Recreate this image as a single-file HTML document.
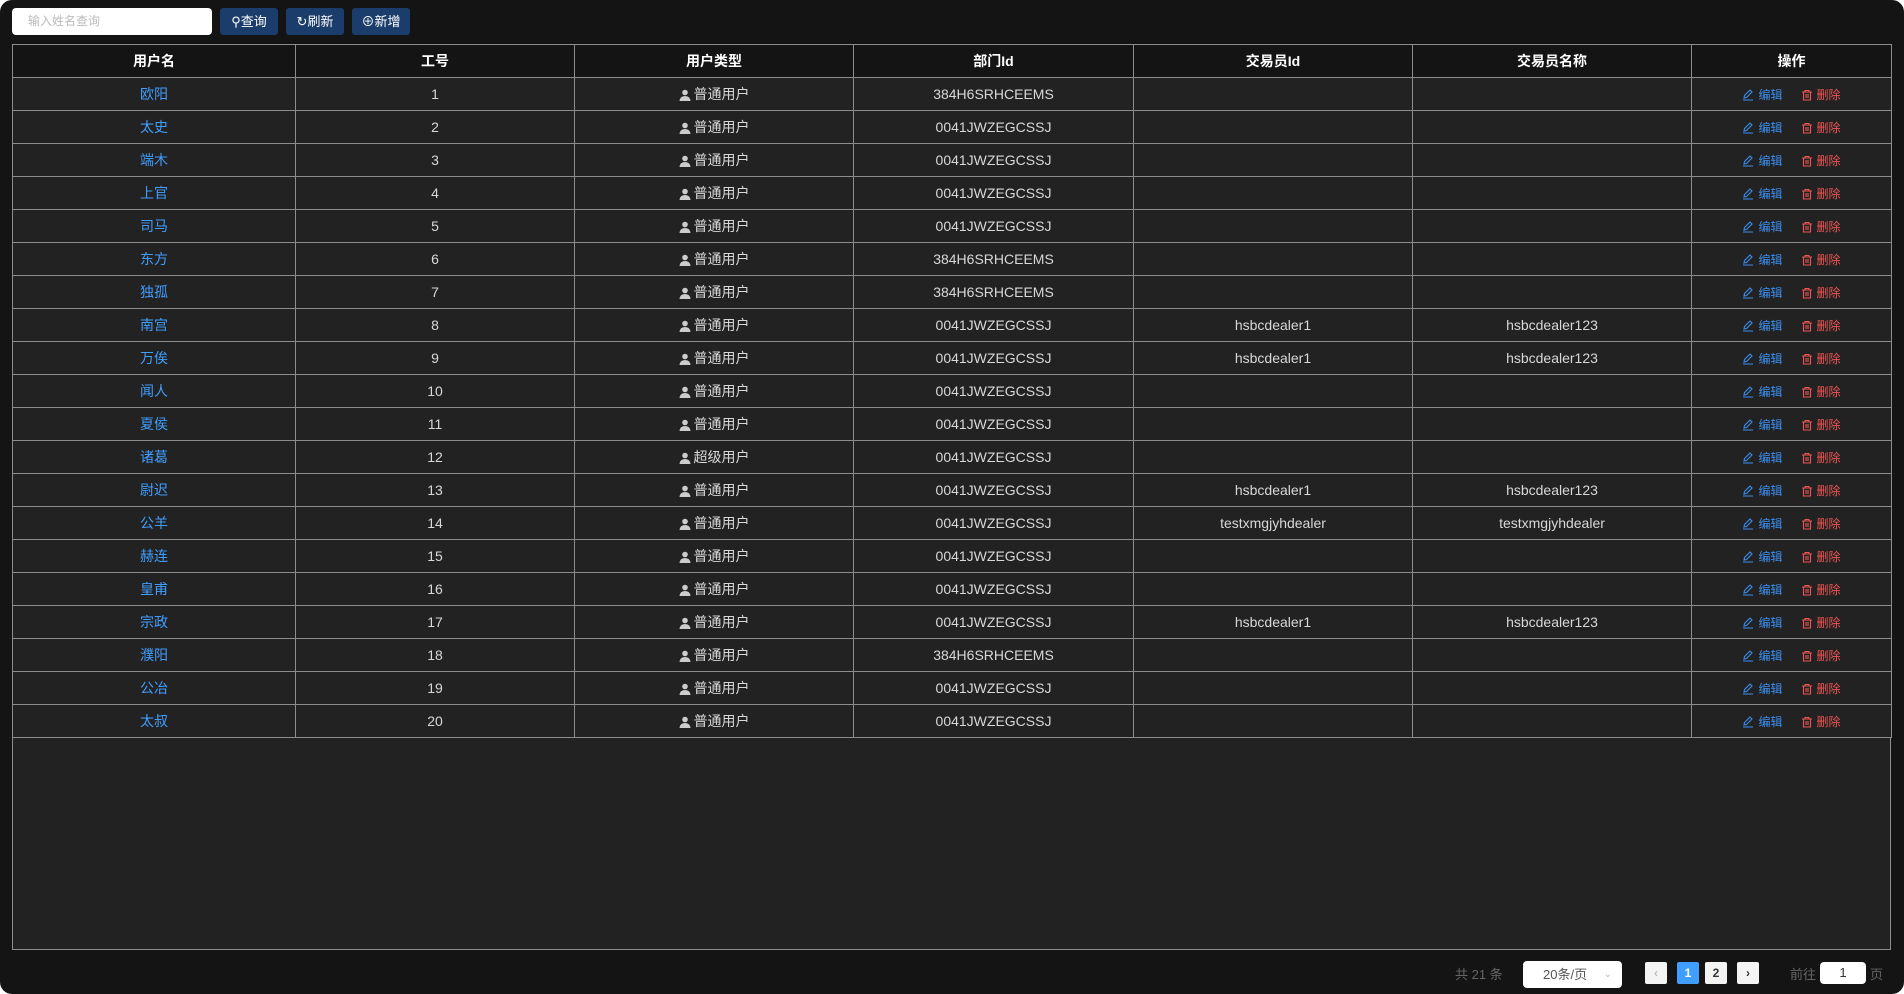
<!DOCTYPE html>
<html><head><meta charset="utf-8"><style>
*{box-sizing:border-box;margin:0;padding:0}
html,body{width:1904px;height:994px;background:#fff;overflow:hidden;font-family:"Liberation Sans","Noto Sans CJK SC",sans-serif}
.wrap{position:absolute;left:0;top:0;width:1904px;height:994px;background:#141414;border-radius:12px}
.inp{position:absolute;left:12px;top:8px;width:200px;height:27px;background:#fff;border-radius:4px;color:#bbb;font-size:12px;line-height:27px;padding-left:16px}
.btn{position:absolute;top:8px;height:27px;width:58px;background:#1b3d6b;border-radius:3px;color:#fff;font-size:13px;line-height:27px;text-align:center}
table{position:absolute;left:12px;top:44px;width:1879px;border-collapse:collapse;table-layout:fixed}
td,th{border:1px solid #8b8b90;height:33px;text-align:center;font-size:14px;color:#d8d8d8;font-weight:normal;padding:0;white-space:nowrap}
th{background:#141414;color:#fff;font-weight:bold;font-size:14px}
td{background:#222}
.n{color:#409eff}
.u svg{vertical-align:-2px;margin-right:3px}
.op{font-size:12px}
.op svg{vertical-align:-2px;margin-right:4px}
.e{color:#3a8ef0}.d{color:#f05454;margin-left:18px}
.box{position:absolute;left:12px;top:44px;width:1879px;height:906px;border:1px solid #8b8b90;background:#222}
.pg{position:absolute;top:961px;font-size:13px;color:#666;line-height:27px}
.pb{position:absolute;top:961px;height:22px;width:22px;border-radius:2px;background:#f4f4f5;color:#333;font-size:12px;font-weight:bold;text-align:center;line-height:22px}
</style></head><body><div class="wrap">
<div class="inp">输入姓名查询</div>
<div class="btn" style="left:220px">&#9906;查询</div>
<div class="btn" style="left:286px">&#8635;刷新</div>
<div class="btn" style="left:352px">&#8853;新增</div>
<div class="box"></div>
<svg width="0" height="0" style="position:absolute"><defs>
<symbol id="ed" viewBox="0 0 12 12"><path d="M2 9 L2.5 6.5 L8 1 L10 3 L4.5 8.5 Z M1 11 H11" fill="none" stroke="#3a8ef0" stroke-width="1.1"/></symbol>
<symbol id="tr" viewBox="0 0 12 12"><path d="M1 3 H11 M4 3 V1.5 H8 V3 M2.5 3 V11 H9.5 V3 M5 5 V9 M7 5 V9" fill="none" stroke="#f05454" stroke-width="1.1"/></symbol>
<symbol id="us" viewBox="0 0 12 12"><circle cx="6" cy="3.5" r="2.8" fill="#ccc"/><path d="M0.5 12 Q1 7 6 7 Q11 7 11.5 12Z" fill="#ccc"/></symbol>
</defs></svg>
<table>
<colgroup><col style="width:283px"><col style="width:279px"><col style="width:279px"><col style="width:280px"><col style="width:279px"><col style="width:279px"><col style="width:200px"></colgroup>
<tr><th>用户名</th><th>工号</th><th>用户类型</th><th>部门Id</th><th>交易员Id</th><th>交易员名称</th><th>操作</th></tr>
<tr><td class="n">欧阳</td><td>1</td><td class="u"><svg width="12" height="12"><use href="#us"/></svg>普通用户</td><td>384H6SRHCEEMS</td><td></td><td></td><td class="op"><span class="e"><svg width="12" height="12"><use href="#ed"/></svg>编辑</span><span class="d"><svg width="12" height="12"><use href="#tr"/></svg>删除</span></td></tr>
<tr><td class="n">太史</td><td>2</td><td class="u"><svg width="12" height="12"><use href="#us"/></svg>普通用户</td><td>0041JWZEGCSSJ</td><td></td><td></td><td class="op"><span class="e"><svg width="12" height="12"><use href="#ed"/></svg>编辑</span><span class="d"><svg width="12" height="12"><use href="#tr"/></svg>删除</span></td></tr>
<tr><td class="n">端木</td><td>3</td><td class="u"><svg width="12" height="12"><use href="#us"/></svg>普通用户</td><td>0041JWZEGCSSJ</td><td></td><td></td><td class="op"><span class="e"><svg width="12" height="12"><use href="#ed"/></svg>编辑</span><span class="d"><svg width="12" height="12"><use href="#tr"/></svg>删除</span></td></tr>
<tr><td class="n">上官</td><td>4</td><td class="u"><svg width="12" height="12"><use href="#us"/></svg>普通用户</td><td>0041JWZEGCSSJ</td><td></td><td></td><td class="op"><span class="e"><svg width="12" height="12"><use href="#ed"/></svg>编辑</span><span class="d"><svg width="12" height="12"><use href="#tr"/></svg>删除</span></td></tr>
<tr><td class="n">司马</td><td>5</td><td class="u"><svg width="12" height="12"><use href="#us"/></svg>普通用户</td><td>0041JWZEGCSSJ</td><td></td><td></td><td class="op"><span class="e"><svg width="12" height="12"><use href="#ed"/></svg>编辑</span><span class="d"><svg width="12" height="12"><use href="#tr"/></svg>删除</span></td></tr>
<tr><td class="n">东方</td><td>6</td><td class="u"><svg width="12" height="12"><use href="#us"/></svg>普通用户</td><td>384H6SRHCEEMS</td><td></td><td></td><td class="op"><span class="e"><svg width="12" height="12"><use href="#ed"/></svg>编辑</span><span class="d"><svg width="12" height="12"><use href="#tr"/></svg>删除</span></td></tr>
<tr><td class="n">独孤</td><td>7</td><td class="u"><svg width="12" height="12"><use href="#us"/></svg>普通用户</td><td>384H6SRHCEEMS</td><td></td><td></td><td class="op"><span class="e"><svg width="12" height="12"><use href="#ed"/></svg>编辑</span><span class="d"><svg width="12" height="12"><use href="#tr"/></svg>删除</span></td></tr>
<tr><td class="n">南宫</td><td>8</td><td class="u"><svg width="12" height="12"><use href="#us"/></svg>普通用户</td><td>0041JWZEGCSSJ</td><td>hsbcdealer1</td><td>hsbcdealer123</td><td class="op"><span class="e"><svg width="12" height="12"><use href="#ed"/></svg>编辑</span><span class="d"><svg width="12" height="12"><use href="#tr"/></svg>删除</span></td></tr>
<tr><td class="n">万俟</td><td>9</td><td class="u"><svg width="12" height="12"><use href="#us"/></svg>普通用户</td><td>0041JWZEGCSSJ</td><td>hsbcdealer1</td><td>hsbcdealer123</td><td class="op"><span class="e"><svg width="12" height="12"><use href="#ed"/></svg>编辑</span><span class="d"><svg width="12" height="12"><use href="#tr"/></svg>删除</span></td></tr>
<tr><td class="n">闻人</td><td>10</td><td class="u"><svg width="12" height="12"><use href="#us"/></svg>普通用户</td><td>0041JWZEGCSSJ</td><td></td><td></td><td class="op"><span class="e"><svg width="12" height="12"><use href="#ed"/></svg>编辑</span><span class="d"><svg width="12" height="12"><use href="#tr"/></svg>删除</span></td></tr>
<tr><td class="n">夏侯</td><td>11</td><td class="u"><svg width="12" height="12"><use href="#us"/></svg>普通用户</td><td>0041JWZEGCSSJ</td><td></td><td></td><td class="op"><span class="e"><svg width="12" height="12"><use href="#ed"/></svg>编辑</span><span class="d"><svg width="12" height="12"><use href="#tr"/></svg>删除</span></td></tr>
<tr><td class="n">诸葛</td><td>12</td><td class="u"><svg width="12" height="12"><use href="#us"/></svg>超级用户</td><td>0041JWZEGCSSJ</td><td></td><td></td><td class="op"><span class="e"><svg width="12" height="12"><use href="#ed"/></svg>编辑</span><span class="d"><svg width="12" height="12"><use href="#tr"/></svg>删除</span></td></tr>
<tr><td class="n">尉迟</td><td>13</td><td class="u"><svg width="12" height="12"><use href="#us"/></svg>普通用户</td><td>0041JWZEGCSSJ</td><td>hsbcdealer1</td><td>hsbcdealer123</td><td class="op"><span class="e"><svg width="12" height="12"><use href="#ed"/></svg>编辑</span><span class="d"><svg width="12" height="12"><use href="#tr"/></svg>删除</span></td></tr>
<tr><td class="n">公羊</td><td>14</td><td class="u"><svg width="12" height="12"><use href="#us"/></svg>普通用户</td><td>0041JWZEGCSSJ</td><td>testxmgjyhdealer</td><td>testxmgjyhdealer</td><td class="op"><span class="e"><svg width="12" height="12"><use href="#ed"/></svg>编辑</span><span class="d"><svg width="12" height="12"><use href="#tr"/></svg>删除</span></td></tr>
<tr><td class="n">赫连</td><td>15</td><td class="u"><svg width="12" height="12"><use href="#us"/></svg>普通用户</td><td>0041JWZEGCSSJ</td><td></td><td></td><td class="op"><span class="e"><svg width="12" height="12"><use href="#ed"/></svg>编辑</span><span class="d"><svg width="12" height="12"><use href="#tr"/></svg>删除</span></td></tr>
<tr><td class="n">皇甫</td><td>16</td><td class="u"><svg width="12" height="12"><use href="#us"/></svg>普通用户</td><td>0041JWZEGCSSJ</td><td></td><td></td><td class="op"><span class="e"><svg width="12" height="12"><use href="#ed"/></svg>编辑</span><span class="d"><svg width="12" height="12"><use href="#tr"/></svg>删除</span></td></tr>
<tr><td class="n">宗政</td><td>17</td><td class="u"><svg width="12" height="12"><use href="#us"/></svg>普通用户</td><td>0041JWZEGCSSJ</td><td>hsbcdealer1</td><td>hsbcdealer123</td><td class="op"><span class="e"><svg width="12" height="12"><use href="#ed"/></svg>编辑</span><span class="d"><svg width="12" height="12"><use href="#tr"/></svg>删除</span></td></tr>
<tr><td class="n">濮阳</td><td>18</td><td class="u"><svg width="12" height="12"><use href="#us"/></svg>普通用户</td><td>384H6SRHCEEMS</td><td></td><td></td><td class="op"><span class="e"><svg width="12" height="12"><use href="#ed"/></svg>编辑</span><span class="d"><svg width="12" height="12"><use href="#tr"/></svg>删除</span></td></tr>
<tr><td class="n">公冶</td><td>19</td><td class="u"><svg width="12" height="12"><use href="#us"/></svg>普通用户</td><td>0041JWZEGCSSJ</td><td></td><td></td><td class="op"><span class="e"><svg width="12" height="12"><use href="#ed"/></svg>编辑</span><span class="d"><svg width="12" height="12"><use href="#tr"/></svg>删除</span></td></tr>
<tr><td class="n">太叔</td><td>20</td><td class="u"><svg width="12" height="12"><use href="#us"/></svg>普通用户</td><td>0041JWZEGCSSJ</td><td></td><td></td><td class="op"><span class="e"><svg width="12" height="12"><use href="#ed"/></svg>编辑</span><span class="d"><svg width="12" height="12"><use href="#tr"/></svg>删除</span></td></tr>
</table>
<div class="pg" style="left:1455px">共 21 条</div>
<div class="pg" style="left:1523px;width:99px;height:27px;background:#fff;border-radius:4px;color:#555;padding-left:20px;font-size:13px">20条/页<span style="position:absolute;right:10px;color:#bbb;font-size:10px">&#8964;</span></div>
<div class="pb" style="left:1645px;top:962px;color:#bbb">&lsaquo;</div>
<div class="pb" style="left:1677px;top:962px;background:#409eff;color:#fff">1</div>
<div class="pb" style="left:1705px;top:962px">2</div>
<div class="pb" style="left:1737px;top:962px">&rsaquo;</div>
<div class="pg" style="left:1790px">前往</div>
<div class="pg" style="left:1820px;width:46px;height:22px;top:962px;background:#fff;border-radius:4px;color:#333;text-align:center;line-height:22px">1</div>
<div class="pg" style="left:1870px">页</div>
</div></body></html>
